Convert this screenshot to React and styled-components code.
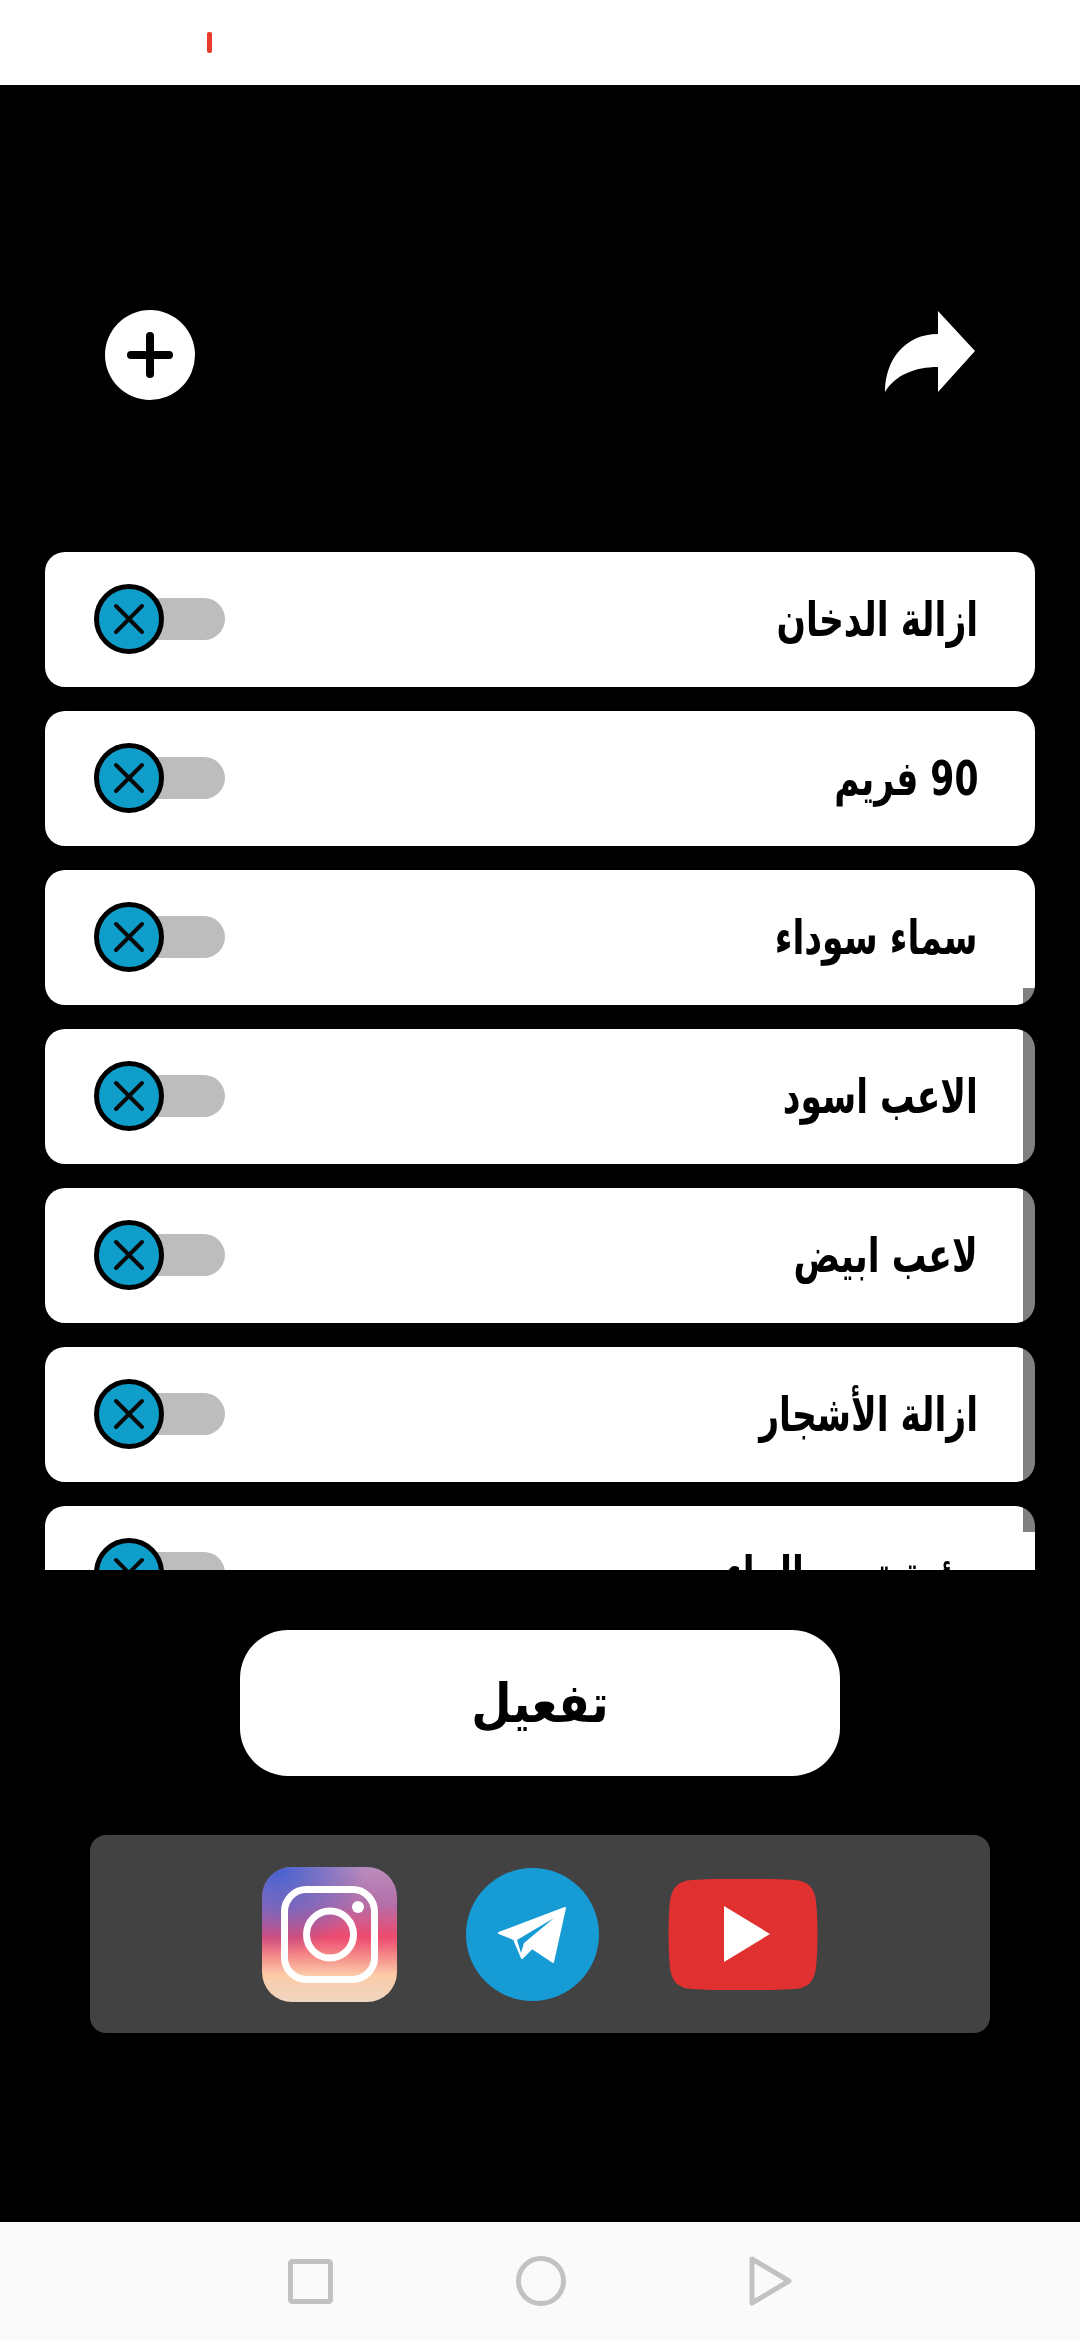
import React from 'react';
import styled, { createGlobalStyle } from 'styled-components';

const GlobalStyle = createGlobalStyle`
  html, body {
    margin: 0;
    padding: 0;
    background: #000;
  }
  * {
    box-sizing: border-box;
  }
`;

const Screen = styled.div`
  width: 1080px;
  height: 2340px;
  display: flex;
  flex-direction: column;
  background: #000;
  font-family: "DejaVu Sans", "Noto Sans", sans-serif;
  overflow: hidden;
`;

const StatusBar = styled.div`
  height: 85px;
  background: #fff;
  padding: 32px 0 0 207px;
`;

const StatusMark = styled.div`
  width: 5px;
  height: 21px;
  border-radius: 2px;
  background: #e8392a;
`;

const Main = styled.main`
  flex: 1;
  display: flex;
  flex-direction: column;
  align-items: center;
  padding: 225px 45px 0;
`;

const TopActions = styled.div`
  width: 100%;
  height: 90px;
  display: flex;
  justify-content: space-between;
  padding: 0 60px;
  margin-bottom: 152px;
`;

const AddButton = styled.button`
  width: 90px;
  height: 90px;
  border: 0;
  padding: 0;
  border-radius: 50%;
  background: #fff;
  display: flex;
  align-items: center;
  justify-content: center;
`;

const ShareButton = styled.button`
  width: 90px;
  height: 90px;
  border: 0;
  padding: 0;
  background: none;
  display: flex;
`;

const ListFrame = styled.div`
  position: relative;
  width: 990px;
  height: 1018px;
  flex-shrink: 0;
`;

const List = styled.div`
  height: 100%;
  display: flex;
  flex-direction: column;
  gap: 24px;
  overflow: hidden;
`;

const ScrollThumb = styled.div`
  position: absolute;
  top: 436px;
  right: 0;
  width: 12px;
  height: 544px;
  background: #808080;
  mix-blend-mode: multiply;
`;

const Row = styled.div`
  flex-shrink: 0;
  height: 135px;
  display: flex;
  align-items: center;
  justify-content: space-between;
  padding: 0 57px 1px 49px;
  background: #fff;
  border-radius: 20px;
  direction: rtl;
`;

/* the installed arabic face is wider than the one in the app, so squeeze it */
const RowLabel = styled.span`
  font-size: 48px;
  font-weight: 700;
  color: #000;
  transform: scaleX(0.72);
  transform-origin: right center;
`;

const Toggle = styled.div`
  position: relative;
  width: 131px;
  height: 70px;
  display: flex;
  align-items: center;
  justify-content: flex-end;
  direction: ltr;
`;

const ToggleTrack = styled.div`
  width: 110px;
  height: 42px;
  border-radius: 21px;
  background: #bdbdbd;
`;

const ToggleKnob = styled.div`
  position: absolute;
  left: 0;
  top: 0;
  width: 70px;
  height: 70px;
  border-radius: 50%;
  border: 5px solid #000;
  background: #0f9dca;
  display: flex;
  align-items: center;
  justify-content: center;
`;

const ActivateButton = styled.button`
  flex-shrink: 0;
  width: 600px;
  height: 146px;
  margin-top: 60px;
  border: 0;
  border-radius: 48px;
  background: #fff;
  color: #000;
  font-family: inherit;
  font-size: 54px;
  font-weight: 700;
`;

const ActivateLabel = styled.span`
  display: inline-block;
  transform: scaleX(0.86);
`;

const SocialPanel = styled.div`
  width: 900px;
  height: 198px;
  margin-top: 59px;
  flex-shrink: 0;
  padding-left: 172px;
  display: flex;
  align-items: center;
  gap: 69px;
  background: #424242;
  border-radius: 16px;
`;

const NavBar = styled.nav`
  height: 118px;
  flex-shrink: 0;
  background: #fafafa;
  padding-left: 288px;
  display: flex;
  align-items: center;
  gap: 183px;
`;

const PlusIcon = () => (
  <svg width="46" height="46" viewBox="0 0 46 46">
    <path d="M23 4v38M4 23h38" stroke="#000" strokeWidth="8" strokeLinecap="round" />
  </svg>
);

const ShareIcon = () => (
  <svg width="90" height="90" viewBox="0 0 90 90">
    <path d="M53 1 L90 41 L53 82 V57 C30 57 10 65 0 82 C0 50 20 24 53 24 Z" fill="#fff" />
  </svg>
);

const CrossIcon = () => (
  <svg width="32" height="32" viewBox="0 0 32 32">
    <path d="M3 3 L29 29 M29 3 L3 29" stroke="#0a0a0a" strokeWidth="4" strokeLinecap="round" />
  </svg>
);

const InstagramIcon = () => (
  <svg width="135" height="135" viewBox="0 0 135 135">
    <defs>
      <linearGradient id="igBase" x1="0" y1="0" x2="0" y2="1">
        <stop offset="0" stopColor="#b98dbd" />
        <stop offset="0.28" stopColor="#b56ea8" />
        <stop offset="0.52" stopColor="#ee4a6e" />
        <stop offset="0.8" stopColor="#fbcba6" />
        <stop offset="1" stopColor="#efd6c2" />
      </linearGradient>
      <radialGradient id="igBlue" cx="0.12" cy="0" r="0.65">
        <stop offset="0" stopColor="#4460d0" />
        <stop offset="1" stopColor="#4460d0" stopOpacity="0" />
      </radialGradient>
    </defs>
    <rect width="135" height="135" rx="30" fill="url(#igBase)" />
    <rect width="135" height="135" rx="30" fill="url(#igBlue)" />
    <rect x="22.5" y="22.5" width="90" height="90" rx="22" fill="none" stroke="#fff" strokeWidth="7" />
    <circle cx="68" cy="67.5" r="23.5" fill="none" stroke="#fff" strokeWidth="7" />
    <circle cx="96" cy="40" r="6" fill="#fff" />
  </svg>
);

const TelegramIcon = () => (
  <svg width="133" height="133" viewBox="0 0 133 133">
    <circle cx="66.5" cy="66.5" r="66.5" fill="#169bd5" />
    <path d="M99 40 L87 94 L66 80 L56 90 L48 71 L33 65 Z" fill="#fff" stroke="#fff" strokeWidth="2" strokeLinejoin="round" />
    <path d="M88 50 L51 72 L55 85 L58 75 Z" fill="#169bd5" />
  </svg>
);

const YoutubeIcon = () => (
  <svg width="150" height="111" viewBox="0 0 150 111">
    <path
      d="M24 1 C55 -1 95 -1 126 1 C140 2 146 8 148 22 C150 42 150 68 148 89 C146 103 140 109 126 110 C95 112 55 112 24 110 C10 109 4 103 2 89 C0 68 0 42 2 22 C4 8 10 2 24 1 Z"
      fill="#e03030"
    />
    <path d="M56 27 L102 55 L56 83 Z" fill="#fff" />
  </svg>
);

const NavSquare = () => (
  <svg width="45" height="45" viewBox="0 0 45 45">
    <rect x="2.5" y="2.5" width="40" height="40" rx="2" fill="none" stroke="#c2c2c2" strokeWidth="5" />
  </svg>
);

const NavCircle = () => (
  <svg width="50" height="50" viewBox="0 0 50 50">
    <circle cx="25" cy="25" r="22.5" fill="none" stroke="#c2c2c2" strokeWidth="5" />
  </svg>
);

const NavBack = () => (
  <svg width="43" height="50" viewBox="0 0 43 50">
    <path d="M3 3 L40 25 L3 47 Z" fill="none" stroke="#c2c2c2" strokeWidth="5" strokeLinejoin="round" />
  </svg>
);

const features = [
  'ازالة الدخان',
  '90 فريم',
  'سماء سوداء',
  'الاعب اسود',
  'لاعب ابيض',
  'ازالة الأشجار',
  'رؤية تحت الماء',
];

const App = () => (
  <Screen>
    <GlobalStyle />
    <StatusBar>
      <StatusMark />
    </StatusBar>
    <Main>
      <TopActions>
        <AddButton>
          <PlusIcon />
        </AddButton>
        <ShareButton>
          <ShareIcon />
        </ShareButton>
      </TopActions>
      <ListFrame>
        <List>
          {features.map((name) => (
            <Row key={name}>
              <RowLabel>{name}</RowLabel>
              <Toggle>
                <ToggleTrack />
                <ToggleKnob>
                  <CrossIcon />
                </ToggleKnob>
              </Toggle>
            </Row>
          ))}
        </List>
        <ScrollThumb />
      </ListFrame>
      <ActivateButton>
        <ActivateLabel>تفعيل</ActivateLabel>
      </ActivateButton>
      <SocialPanel>
        <InstagramIcon />
        <TelegramIcon />
        <YoutubeIcon />
      </SocialPanel>
    </Main>
    <NavBar>
      <NavSquare />
      <NavCircle />
      <NavBack />
    </NavBar>
  </Screen>
);

export default App;
